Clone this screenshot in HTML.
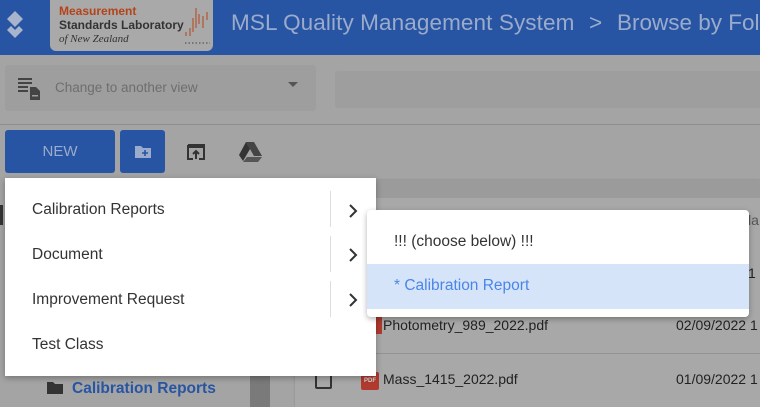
<!DOCTYPE html>
<html><head><meta charset="utf-8"><style>
*{box-sizing:border-box;margin:0;padding:0}
body{width:760px;height:407px;overflow:hidden;background:#a4a4a4;font-family:"Liberation Sans",Arial,sans-serif;position:relative}
.a{position:absolute}
</style></head><body>
<div class="a" style="left:0;top:0;width:760px;height:55px;background:#2855a3"></div>
<svg class="a" style="left:4px;top:10px" width="22" height="30" viewBox="0 0 22 30"><path d="M11 1 L19 9 L11 17 L3 9Z M3 20 L7 16 L11 20 L15 16 L19 20 L11 28Z" fill="#a7b4cc"/></svg>
<div class="a" style="left:50px;top:0;width:163px;height:51px;background:#a9a9a9;border-radius:0 0 6px 6px"></div>
<div class="a" style="left:59px;top:5px;font-size:12px;font-weight:bold;color:#b5431a;line-height:13px">Measurement</div>
<div class="a" style="left:59px;top:19px;font-size:12px;font-weight:bold;color:#333;line-height:13px">Standards Laboratory</div>
<div class="a" style="left:59px;top:33px;font-size:11px;font-style:italic;color:#333;font-family:'Liberation Serif',serif;line-height:13px">of New Zealand</div>
<svg class="a" style="left:183px;top:6px" width="28" height="40"><g stroke="#b5431a" stroke-width="1"><line x1="3" y1="30" x2="3" y2="26"/><line x1="7" y1="30" x2="7" y2="22"/><line x1="10" y1="26" x2="10" y2="12"/><line x1="13" y1="22" x2="13" y2="2"/><line x1="16" y1="18" x2="16" y2="8"/><line x1="20" y1="22" x2="20" y2="10"/><line x1="24" y1="14" x2="24" y2="6"/></g><line x1="2" y1="37" x2="27" y2="37" stroke="#444" stroke-dasharray="1.5 2"/></svg>
<div class="a" style="left:231px;top:10px;font-size:22.5px;color:#9aabcb;white-space:nowrap;letter-spacing:0.1px">MSL Quality Management System</div>
<div class="a" style="left:589px;top:10px;font-size:22.5px;color:#9aabcb">&gt;</div>
<div class="a" style="left:617px;top:10px;font-size:22.5px;color:#9aabcb;white-space:nowrap">Browse by Folder</div>
<div class="a" style="left:5px;top:65px;width:311px;height:46px;background:#9e9e9e;border-radius:3px"></div>
<svg class="a" style="left:18px;top:77px" width="24" height="24"><g fill="#444"><rect x="0" y="1" width="14" height="2"/><rect x="0" y="5" width="14" height="2"/><rect x="0" y="9" width="10" height="2"/><rect x="0" y="13" width="10" height="2"/><path d="M12 10h6l4 4v9h-10z"/></g><rect x="14" y="18" width="6" height="1.5" fill="#9e9e9e"/></svg>
<div class="a" style="left:55px;top:80px;font-size:13.5px;color:#6e6e6e">Change to another view</div>
<svg class="a" style="left:288px;top:82px" width="10" height="6"><path d="M0 0h10L5 5z" fill="#555"/></svg>
<div class="a" style="left:335px;top:71px;width:425px;height:37px;background:#9e9e9e;border-radius:3px 0 0 3px"></div>
<div class="a" style="left:0;top:124px;width:760px;height:1px;background:#8e8e8e"></div>
<div class="a" style="left:5px;top:130px;width:110px;height:43px;background:#2855a3;border-radius:3px;color:#9aabcb;font-size:15px;text-align:center;line-height:43px">NEW</div>
<div class="a" style="left:120px;top:130px;width:45px;height:43px;background:#2855a3;border-radius:3px"></div>
<svg class="a" style="left:135px;top:145px" width="16" height="13"><path d="M0 1h6l2 2h8v10H0z" fill="#9aabcb"/><path d="M10 5v6M7 8h6" stroke="#2855a3" stroke-width="1.6"/></svg>
<svg class="a" style="left:185px;top:142px" width="22" height="20"><path d="M3 3h16v14h-5M8 17H3V3" fill="none" stroke="#333" stroke-width="2"/><path d="M11 17v-8M8 12l3-3 3 3" fill="none" stroke="#333" stroke-width="2"/><rect x="3" y="3" width="16" height="3" fill="#333"/></svg>
<svg class="a" style="left:238px;top:141px" width="25" height="21"><path d="M8 1h8l8 14h-8z" fill="#444"/><path d="M8 1l4 7-7 12L1 14z" fill="#333"/><path d="M9 16h15l-4 5H5z" fill="#555"/></svg>
<div class="a" style="left:295px;top:180px;width:465px;height:227px;background:#a8a8a8;box-shadow:0 0 2px #888"></div>
<div class="a" style="left:295px;top:180px;width:465px;height:18px;background:#9b9b9b"></div>
<div class="a" style="left:295px;top:353px;width:465px;height:1px;background:#939393"></div>
<div class="a" style="left:748px;top:212px;font-size:14px;color:#555">la</div>
<div class="a" style="left:748px;top:265px;font-size:14px;color:#222">1</div>
<div class="a" style="left:383px;top:317px;font-size:14px;color:#222">Photometry_989_2022.pdf</div>
<div class="a" style="left:676px;top:317px;font-size:14px;color:#222;white-space:nowrap">02/09/2022 1</div>
<div class="a" style="left:315px;top:372px;width:17px;height:17px;border:2px solid #333;border-radius:2px"></div>
<div class="a" style="left:361px;top:372px;width:18px;height:18px;background:#b03a2e;border-radius:2px;color:#ddd;font-size:6px;font-weight:bold;text-align:center;line-height:18px">PDF</div>
<div class="a" style="left:383px;top:371px;font-size:14px;color:#222">Mass_1415_2022.pdf</div>
<div class="a" style="left:676px;top:371px;font-size:14px;color:#222;white-space:nowrap">01/09/2022 1</div>
<div class="a" style="left:376px;top:316px;width:6px;height:18px;background:#b03a2e"></div>
<div class="a" style="left:250px;top:375px;width:20px;height:32px;background:#7a7a7a"></div>
<div class="a" style="left:0;top:205px;width:3px;height:20px;background:#333"></div>
<svg class="a" style="left:47px;top:381px" width="16" height="13"><path d="M0 1h6l2 2h8v10H0z" fill="#333"/></svg>
<div class="a" style="left:72px;top:380px;font-size:15.5px;font-weight:bold;color:#2855a3">Calibration Reports</div>
<div class="a" style="left:5px;top:178px;width:371px;height:198px;background:#fff;box-shadow:0 2px 6px rgba(0,0,0,.3)"></div>
<div class="a" style="left:32px;top:201px;font-size:15.5px;color:#333">Calibration Reports</div>
<div class="a" style="left:32px;top:246px;font-size:15.5px;color:#333">Document</div>
<div class="a" style="left:32px;top:291px;font-size:15.5px;color:#333">Improvement Request</div>
<div class="a" style="left:32px;top:336px;font-size:15.5px;color:#333">Test Class</div>
<div class="a" style="left:330px;top:191px;width:1px;height:36px;background:#ddd"></div>
<div class="a" style="left:330px;top:236px;width:1px;height:36px;background:#ddd"></div>
<div class="a" style="left:330px;top:281px;width:1px;height:36px;background:#ddd"></div>
<svg class="a" style="left:348px;top:204px" width="10" height="14"><path d="M2 1l6 6-6 6" fill="none" stroke="#333" stroke-width="2"/></svg>
<svg class="a" style="left:348px;top:248px" width="10" height="14"><path d="M2 1l6 6-6 6" fill="none" stroke="#333" stroke-width="2"/></svg>
<svg class="a" style="left:348px;top:293px" width="10" height="14"><path d="M2 1l6 6-6 6" fill="none" stroke="#333" stroke-width="2"/></svg>
<div class="a" style="left:367px;top:210px;width:382px;height:107px;background:#fff;border-radius:4px;box-shadow:0 2px 6px rgba(0,0,0,.3)"></div>
<div class="a" style="left:367px;top:264px;width:382px;height:45px;background:#d6e4fa"></div>
<div class="a" style="left:394px;top:233px;font-size:15.5px;color:#333">!!! (choose below) !!!</div>
<div class="a" style="left:394px;top:277px;font-size:15.5px;color:#4a86e8">* Calibration Report</div>
</body></html>
